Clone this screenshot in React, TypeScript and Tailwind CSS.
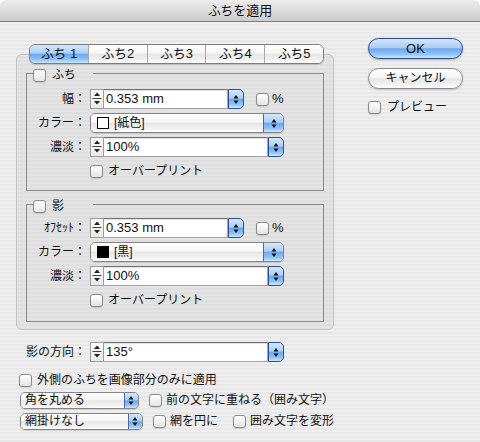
import React from 'react'

const blue =
  'bg-[linear-gradient(#d4e8fc_0%,#a9cff6_45%,#6ea9ef_52%,#8fc2f6_80%,#cbe8ff_100%)]'
const white =
  'bg-[linear-gradient(#ffffff_0%,#f6f6f6_45%,#e6e6e6_52%,#f1f1f1_80%,#ffffff_100%)]'

function Check() {
  return (
    <span className="block w-[13px] h-[13px] shrink-0 rounded-[3px] border border-[#8a8a8a] bg-[linear-gradient(#ffffff,#e4e4e4)] shadow-[0_1px_1px_rgba(0,0,0,0.12)]" />
  )
}

function Arrows() {
  return (
    <svg width="6" height="11" viewBox="0 0 6 11">
      <path d="M0.5 4.5 L5.5 4.5 L3 1 Z M0.5 6.5 L5.5 6.5 L3 10 Z" fill="#111" />
    </svg>
  )
}

function Stepper() {
  return (
    <div className="w-[14px] h-[20px] shrink-0 border border-[#9c9c9c] bg-[linear-gradient(#ffffff,#e9e9e9)] flex justify-center">
      <svg width="12" height="18" viewBox="0 0 12 18">
        <path d="M3 6 L9 6 L6 2.5 Z M3 11 L9 11 L6 14.5 Z" fill="#222" />
        <path d="M1.5 8.5 H10.5" stroke="#444" strokeWidth="1" />
      </svg>
    </div>
  )
}

function StepField({ value, wide }: { value: string; wide?: boolean }) {
  return (
    <div className="flex h-[20px]">
      <Stepper />
      <div
        className={`h-[20px] ${wide ? 'w-[164px]' : 'w-[124px]'} bg-white border border-l-0 border-[#a4a4a4] border-t-[#707070] shadow-[inset_0_1px_1px_rgba(0,0,0,0.12)] pl-[2px] text-[13px] leading-[18px]`}
      >
        {value}
      </div>
      <div className={`w-[16px] h-[20px] rounded-r-[5px] border border-[#31508c] ${blue} flex items-center justify-center`}>
        <Arrows />
      </div>
    </div>
  )
}

function ColorPopup({ label, fill }: { label: string; fill: string }) {
  return (
    <div className="w-[194px] h-[20px] rounded-[5px] border border-[#858585] flex overflow-hidden shadow-[0_1px_1px_rgba(0,0,0,0.12)]">
      <div className={`flex-1 ${white} flex items-center pl-[6px] gap-[5px]`}>
        <span className={`block w-[12px] h-[12px] border border-black ${fill}`} />
        <span className="text-[12px] leading-[18px]">{label}</span>
      </div>
      <div className={`w-[20px] border-l border-[#4a6aa3] ${blue} flex items-center justify-center`}>
        <Arrows />
      </div>
    </div>
  )
}

function SmallPopup({ label }: { label: string }) {
  return (
    <div className="w-[130px] h-[17px] rounded-[5px] border border-[#858585] flex overflow-hidden shadow-[0_1px_1px_rgba(0,0,0,0.12)]">
      <div className={`flex-1 ${white} pl-[4px] text-[12px] leading-[15px]`}>{label}</div>
      <div className={`w-[14px] border-l border-[#4a6aa3] ${blue} flex items-center justify-center`}>
        <Arrows />
      </div>
    </div>
  )
}

function Row({ label, children }: { label: string; children: React.ReactNode }) {
  return (
    <div className="flex items-center h-[20px]">
      <div className="w-[59px] text-right text-[12px] whitespace-nowrap">{label}</div>
      <div className="ml-[4px] flex items-center">{children}</div>
    </div>
  )
}

function Group({ label, body, children }: { label: string; body: string; children: React.ReactNode }) {
  return (
    <div>
      <div className="flex h-[14px]">
        <div className="w-[7px] mt-[4px] border-t border-l border-[#8a8a8a]" />
        <div className="w-[60px] self-start flex items-center gap-[6px]">
          <Check />
          <span className="text-[12px] leading-[13px]">{label}</span>
        </div>
        <div className="flex-1 mt-[4px] border-t border-r border-[#8a8a8a]" />
      </div>
      <div className={`border-x border-b border-[#8a8a8a] flex flex-col gap-[4px] ${body}`}>{children}</div>
    </div>
  )
}

function Overprint() {
  return (
    <div className="pl-[63px] mt-[3px] h-[14px] flex items-center gap-[5px]">
      <Check />
      <span className="text-[12px]">オーバープリント</span>
    </div>
  )
}

export default function App() {
  const tabs = ['ふち 1', 'ふち2', 'ふち3', 'ふち4', 'ふち5']

  return (
    <div className="w-[480px] h-[442px] overflow-hidden bg-white">
      <div className="h-full rounded-t-[6px] overflow-hidden flex flex-col font-['Liberation_Sans','Noto_Sans_CJK_JP',sans-serif] text-[#111]">
        {/* Title bar */}
        <div className="h-[22px] shrink-0 border-b border-[#7c7c7c] bg-[linear-gradient(#ededed,#cbcbcb)] text-center text-[13px] leading-[21px]">
          ふちを適用
        </div>

        <div className="flex-1 flex bg-[repeating-linear-gradient(180deg,#efefef_0px,#efefef_2px,#e8e8e8_2px,#e8e8e8_4px)]">
          {/* Left column */}
          <div className="w-[318px] ml-[16px] pt-[22px]">
            <div className="relative z-10 ml-[13px] w-[295px] h-[20px] flex rounded-[6px] border border-[#7d7d7d] overflow-hidden shadow-[0_1px_1px_rgba(0,0,0,0.15)]">
              {tabs.map((t, i) => (
                <div
                  key={t}
                  className={`flex-1 text-center text-[13px] leading-[18px] ${i === 0 ? blue : white + ' border-l border-[#a8a8a8]'}`}
                >
                  {t}
                </div>
              ))}
            </div>

            <div className="-mt-[10px] rounded-[6px] border border-[#c4c4c4] bg-black/[0.045] pt-[14px] px-[9px] pb-[7px]">
              <Group label="ふち" body="pt-[6px] pb-[12px]">
                <Row label="幅：">
                  <StepField value="0.353 mm" />
                  <div className="ml-[12px] flex items-center gap-[3px]">
                    <Check />
                    <span className="text-[13px]">%</span>
                  </div>
                </Row>
                <Row label="カラー：">
                  <ColorPopup label="[紙色]" fill="bg-white" />
                </Row>
                <Row label="濃淡：">
                  <StepField value="100%" wide />
                </Row>
                <Overprint />
              </Group>

              <div className="mt-[9px]">
                <Group label="影" body="pt-[4px] pb-[14px]">
                  <Row label="ｵﾌｾｯﾄ：">
                    <StepField value="0.353 mm" />
                    <div className="ml-[12px] flex items-center gap-[3px]">
                      <Check />
                      <span className="text-[13px]">%</span>
                    </div>
                  </Row>
                  <Row label="カラー：">
                    <ColorPopup label="[黒]" fill="bg-black" />
                  </Row>
                  <Row label="濃淡：">
                    <StepField value="100%" wide />
                  </Row>
                  <Overprint />
                </Group>
              </div>
            </div>

            {/* Bottom options */}
            <div className="mt-[12px] flex items-center h-[20px]">
              <div className="w-[70px] text-right text-[12px]">影の方向：</div>
              <div className="ml-[4px]">
                <StepField value="135°" wide />
              </div>
            </div>

            <div className="mt-[11px] pl-[3px] h-[14px] flex items-center gap-[5px]">
              <Check />
              <span className="text-[12px] whitespace-nowrap">外側のふちを画像部分のみに適用</span>
            </div>

            <div className="mt-[4px] ml-[4px] flex items-center">
              <SmallPopup label="角を丸める" />
              <div className="ml-[10px] flex items-center gap-[4px]">
                <Check />
                <span className="text-[12px] whitespace-nowrap">前の文字に重ねる（囲み文字）</span>
              </div>
            </div>

            <div className="mt-[3px] ml-[4px] flex items-center">
              <SmallPopup label="網掛けなし" />
              <div className="ml-[10px] flex items-center gap-[4px]">
                <Check />
                <span className="text-[12px] whitespace-nowrap">網を円に</span>
              </div>
              <div className="ml-[15px] flex items-center gap-[4px]">
                <Check />
                <span className="text-[12px] whitespace-nowrap">囲み文字を変形</span>
              </div>
            </div>
          </div>

          {/* Right column */}
          <div className="ml-[34px] pt-[16px] flex flex-col">
            <div className={`w-[95px] h-[21px] rounded-full border border-[#2e4b87] ${blue} text-center text-[13px] leading-[19px] shadow-[0_1px_2px_rgba(0,0,0,0.25)]`}>
              OK
            </div>
            <div className={`mt-[9px] w-[95px] h-[21px] rounded-full border border-[#8a8a8a] ${white} text-center text-[12px] leading-[19px] shadow-[0_1px_2px_rgba(0,0,0,0.2)]`}>
              キャンセル
            </div>
            <div className="mt-[11px] h-[14px] flex items-center gap-[6px]">
              <Check />
              <span className="text-[12px] leading-[14px]">プレビュー</span>
            </div>
          </div>
        </div>
      </div>
    </div>
  )
}
